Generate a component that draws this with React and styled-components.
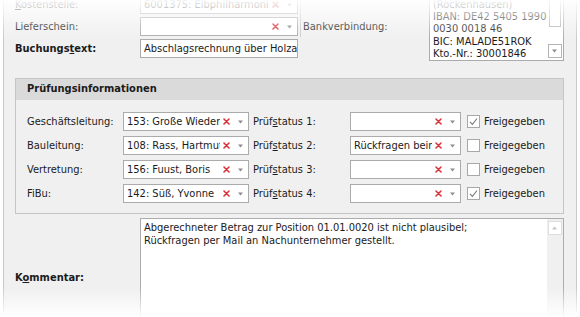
import React from 'react';
import styled, { createGlobalStyle } from 'styled-components';

const GlobalStyle = createGlobalStyle`
  html, body {
    margin: 0;
    padding: 0;
    background: #fff;
  }
  body {
    font-family: "DejaVu Sans Condensed", "DejaVu Sans", "Liberation Sans", sans-serif;
    font-stretch: condensed;
    font-size: 11px;
    color: #1b1b1b;
  }
`;

const Page = styled.div`
  position: relative;
  width: 580px;
  height: 317px;
  overflow: hidden;
  background: #fff;
`;

const Panel = styled.div`
  margin-left: 3px;
  width: 549px;
  height: 100%;
  box-sizing: content-box;
  padding: 0 12px 0 11px;
  background: #f0f0f0;
  border-left: 1px solid #c9c9c9;
  border-right: 1px solid #c9c9c9;
`;

const TopGrid = styled.div`
  display: grid;
  grid-template-columns: 125px 158px 5px 126px 135px;
  grid-template-rows: 19px 19px 19px;
  row-gap: 3px;
  margin-top: -5px;
`;

const Label = styled.div`
  display: flex;
  align-items: center;
  white-space: nowrap;
  font-weight: ${({ $bold }) => ($bold ? 'bold' : 'normal')};
  grid-column: ${({ $col }) => $col || 'auto'};
  grid-row: ${({ $row }) => $row || 'auto'};
`;

const Sep = styled.div`
  grid-column: 3;
  grid-row: 1 / span 2;
  justify-self: center;
  width: 1px;
  background: #c9c9c9;
  margin-bottom: -1px;
`;

const Combo = styled.div`
  display: flex;
  align-items: center;
  box-sizing: border-box;
  height: 19px;
  width: ${({ $w }) => ($w ? `${$w}px` : 'auto')};
  flex: none;
  background: #fff;
  border: 1px solid #ababab;
  padding: 0 4px 0 3px;
  grid-column: ${({ $col }) => $col || 'auto'};
  grid-row: ${({ $row }) => $row || 'auto'};
`;

const ComboText = styled.div`
  flex: 1;
  min-width: 0;
  overflow: hidden;
  white-space: nowrap;
  margin-right: 3px;
`;

const ClearIcon = styled.svg`
  width: 7px;
  height: 7px;
  flex: none;
  margin-right: 7px;
`;

const ArrowIcon = styled.svg`
  width: 7px;
  height: 4px;
  flex: none;
`;

const TextBox = styled.div`
  box-sizing: border-box;
  height: 19px;
  background: #fff;
  border: 1px solid #ababab;
  padding: 0 0 0 3px;
  display: flex;
  align-items: center;
  white-space: nowrap;
  overflow: hidden;
  grid-column: 2 / span 2;
  grid-row: 3;
  width: 158px;
`;

const BankBox = styled.div`
  grid-column: 5;
  grid-row: 1 / span 3;
  margin-bottom: -3px;
  display: flex;
  background: #fff;
  border: 1px solid #ababab;
  border-top: none;
`;

const BankText = styled.div`
  flex: 1;
  padding: 4px 0 0 3px;
  line-height: 12.2px;
  white-space: nowrap;
  overflow: hidden;
`;

const ScrollCol = styled.div`
  width: 15px;
  flex: none;
  display: flex;
  flex-direction: column;
  justify-content: space-between;
  align-items: center;
  padding: 0 1px 2px 0;
  background: ${({ $track }) => $track || '#fff'};
`;

const Thumb = styled.div`
  width: 12px;
  height: 32px;
  box-sizing: border-box;
  border: 1px solid #b4b4b4;
  border-top: none;
  background: #fff;
`;

const ScrollBtn = styled.div`
  width: 14px;
  height: 14px;
  box-sizing: border-box;
  border: 1px solid ${({ $light }) => ($light ? '#dedede' : '#b4b4b4')};
  background: #fff;
  display: flex;
  align-items: center;
  justify-content: center;
  margin-top: ${({ $top }) => ($top ? '2px' : '0')};
`;

const Group = styled.div`
  margin-top: 20px;
  border: 1px solid #c6c6c6;
`;

const GroupHeader = styled.div`
  height: 21px;
  line-height: 20px;
  background: #dadada;
  padding-left: 11px;
  font-weight: bold;
`;

const GroupBody = styled.div`
  display: flex;
  flex-direction: column;
  gap: 5px;
  padding: 12px 11px 10px 11px;
`;

const Row = styled.div`
  display: flex;
  align-items: center;
  height: 19px;
`;

const RowLabel = styled.div`
  width: ${({ $w }) => $w}px;
  margin-left: ${({ $ml }) => ($ml ? `${$ml}px` : '0')};
  flex: none;
  white-space: nowrap;
`;

const Check = styled.div`
  width: 13px;
  height: 13px;
  box-sizing: border-box;
  border: 1px solid #a8a8a8;
  background: #fff;
  margin-left: 6px;
  flex: none;
  display: flex;
  align-items: center;
  justify-content: center;
`;

const CheckLabel = styled.div`
  margin-left: 4px;
  white-space: nowrap;
`;

const CommentRow = styled.div`
  display: grid;
  grid-template-columns: 125px 1fr;
  height: 118px;
  margin-top: 4px;
`;

const CommentBox = styled.div`
  display: flex;
  background: #fff;
  border: 1px solid #acacac;
`;

const CommentText = styled.div`
  flex: 1;
  padding: 2px 3px;
  line-height: 13px;
`;

const Fade = styled.div`
  position: absolute;
  left: 0;
  right: 0;
  pointer-events: none;
  ${({ $bottom }) =>
    $bottom
      ? `bottom: 0; height: 30px; background: linear-gradient(to bottom, rgba(255,255,255,0), rgba(255,255,255,0.97));`
      : `top: 0; height: 40px; background: linear-gradient(to bottom, rgba(255,255,255,0.95), rgba(255,255,255,0.55) 16px, rgba(255,255,255,0.25) 27px, rgba(255,255,255,0) 40px);`}
`;

const Clear = () => (
  <ClearIcon viewBox="0 0 7 7">
    <path d="M1 1 L6 6 M6 1 L1 6" stroke="#d8353d" strokeWidth="1.6" strokeLinecap="round" />
  </ClearIcon>
);

const Arrow = () => (
  <ArrowIcon viewBox="0 0 7 4">
    <path d="M1 0.5 L6 0.5 L3.5 3.5 Z" fill="#8c8c8c" />
  </ArrowIcon>
);

const ComboBox = ({ text, w, col, row }) => (
  <Combo $w={w} $col={col} $row={row}>
    <ComboText>{text}</ComboText>
    <Clear />
    <Arrow />
  </Combo>
);

const Tick = () => (
  <svg width="9" height="9" viewBox="0 0 9 9">
    <path d="M1 4.8 L3.4 7.3 L8 1.5" fill="none" stroke="#7a7a7a" strokeWidth="1.1" />
  </svg>
);

const rows = [
  { label: 'Geschäftsleitung:', person: '153: Große Wiederkehr', n: 1, status: '', ok: true },
  { label: 'Bauleitung:', person: '108: Rass, Hartmut', n: 2, status: 'Rückfragen beim NU', ok: false },
  { label: 'Vertretung:', person: '156: Fuust, Boris', n: 3, status: '', ok: false },
  { label: 'FiBu:', person: '142: Süß, Yvonne', n: 4, status: '', ok: true },
];

export default function App() {
  return (
    <>
      <GlobalStyle />
      <Page>
        <Panel>
          <TopGrid>
            <Label $col={1} $row={1}>
              <span><u>K</u>ostenstelle:</span>
            </Label>
            <ComboBox text="6001375: Elbphilharmonie" w={158} col="2 / span 2" row={1} />
            <Label $col={1} $row={2}>Lieferschein:</Label>
            <ComboBox text="" w={158} col="2 / span 2" row={2} />
            <Sep />
            <Label $col={4} $row={2}>Bankverbindung:</Label>
            <BankBox>
              <BankText>
                (Rockenhausen)<br />
                IBAN: DE42 5405 1990<br />
                0030 0018 46<br />
                BIC: MALADE51ROK<br />
                Kto.-Nr.: 30001846
              </BankText>
              <ScrollCol>
                <Thumb />
                <ScrollBtn>
                  <Arrow />
                </ScrollBtn>
              </ScrollCol>
            </BankBox>
            <Label $bold $col={1} $row={3}>
              <span>Buchungs<u>t</u>ext:</span>
            </Label>
            <TextBox>Abschlagsrechnung über Holzarbeiten</TextBox>
          </TopGrid>

          <Group>
            <GroupHeader>Prüfungsinformationen</GroupHeader>
            <GroupBody>
              {rows.map((r) => (
                <Row key={r.n}>
                  <RowLabel $w={96}>{r.label}</RowLabel>
                  <ComboBox text={r.person} w={126} />
                  <RowLabel $w={97} $ml={4}>
                    Prüf<u>s</u>tatus {r.n}:
                  </RowLabel>
                  <ComboBox text={r.status} w={111} />
                  <Check>{r.ok && <Tick />}</Check>
                  <CheckLabel>Freigegeben</CheckLabel>
                </Row>
              ))}
            </GroupBody>
          </Group>

          <CommentRow>
            <Label $bold>
              <span>K<u>o</u>mmentar:</span>
            </Label>
            <CommentBox>
              <CommentText>
                Abgerechneter Betrag zur Position 01.01.0020 ist nicht plausibel;<br />
                Rückfragen per Mail an Nachunternehmer gestellt.
              </CommentText>
              <ScrollCol $track="#f0f0f0">
                <ScrollBtn $light $top>
                  <svg width="7" height="4" viewBox="0 0 7 4">
                    <path d="M1 3.5 L6 3.5 L3.5 0.5 Z" fill="#c4c4c4" />
                  </svg>
                </ScrollBtn>
              </ScrollCol>
            </CommentBox>
          </CommentRow>
        </Panel>
        <Fade />
        <Fade $bottom />
      </Page>
    </>
  );
}
